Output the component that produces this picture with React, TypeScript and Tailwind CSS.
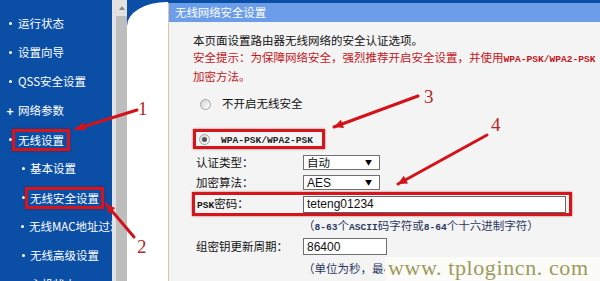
import React from "react";

type Item = { label: React.ReactNode; sub?: boolean; plus?: boolean; boxed?: boolean };

const menu: Item[] = [
  { label: "运行状态" },
  { label: "设置向导" },
  { label: "QSS安全设置" },
  { label: "网络参数", plus: true },
  { label: "无线设置", boxed: true },
  { label: "基本设置", sub: true },
  { label: "无线安全设置", sub: true, boxed: true },
  { label: "无线MAC地址过滤", sub: true },
  { label: "无线高级设置", sub: true },
  { label: "主机状态", sub: true },
];

function Mono({ children }: { children: React.ReactNode }) {
  return <span className="font-['Liberation_Mono',monospace] text-[9.6px] font-bold">{children}</span>;
}

function Radio({ checked }: { checked?: boolean }) {
  return (
    <span className="flex h-[11px] w-[11px] shrink-0 items-center justify-center rounded-full border border-[#a3a3a3] bg-gradient-to-br from-[#d6d6d6] to-white">
      {checked && <span className="h-[5px] w-[5px] rounded-full bg-[#555]" />}
    </span>
  );
}

function Select({ value, latin }: { value: string; latin?: boolean }) {
  return (
    <div className="flex h-[15px] w-[77px] items-center justify-between border border-[#6f6f6f] bg-white pl-[3px] pr-[7px]">
      <span className={latin ? "font-['Liberation_Sans',sans-serif] text-[12px]" : "text-[11.5px]"}>{value}</span>
      <span className="text-[7px] leading-none text-black">▼</span>
    </div>
  );
}

// arrow head polygon pointing at (x, y), coming from (fx, fy)
function head(x: number, y: number, fx: number, fy: number) {
  const a = Math.atan2(y - fy, x - fx);
  const l = 9;
  const w = 4.5;
  const bx = x - l * Math.cos(a);
  const by = y - l * Math.sin(a);
  const px = -Math.sin(a) * w;
  const py = Math.cos(a) * w;
  return `${x},${y} ${bx + px},${by + py} ${bx - px},${by - py}`;
}

const lines = [
  { x: 76, y: 129, fx: 137, fy: 110 },
  { x: 106, y: 204, fx: 134, fy: 237 },
  { x: 334, y: 127, fx: 418, fy: 96 },
  { x: 398, y: 184, fx: 487, fy: 135 },
];

export default function App() {
  return (
    <div className="relative flex h-[281px] w-[600px] overflow-hidden bg-[#0b4ea6] font-['Noto_Sans_CJK_SC',sans-serif]">
      {/* 左侧菜单 */}
      <nav className="w-[112px] shrink-0 overflow-hidden pt-[9px] text-[11.5px] text-white">
        {menu.map((m, i) => (
          <div key={i} className={`flex h-[29px] items-center whitespace-nowrap ${m.sub ? "pl-[21px]" : "pl-[8px]"}`}>
            <span className="flex w-[4px] justify-center">
              {m.plus ? (
                <span className="text-[12px] font-bold leading-none">+</span>
              ) : (
                <span className="h-[3px] w-[3px] shrink-0 rounded-full bg-white" />
              )}
            </span>
            {m.boxed ? (
              <span
                className={`border-[3px] border-[#d6141c] leading-[16px] shadow-[0_0_2px_rgba(120,0,0,0.6)] ${
                  m.sub ? "px-[2px]" : "px-[3px]"
                }`}
              >
                {m.label}
              </span>
            ) : (
              <span className={m.sub ? "ml-[5px]" : "ml-[6px]"}>{m.label}</span>
            )}
          </div>
        ))}
      </nav>

      {/* 滚动条 */}
      <div className="flex w-[15px] shrink-0 flex-col bg-[#e2e2e2]">
        <div className="flex h-[16px] items-center justify-center pl-[4px]">
          <span className="h-0 w-0 border-x-[3px] border-b-[4px] border-x-transparent border-b-[#8a8a8a]" />
        </div>
        <div className="ml-[4px] flex-1 bg-[#bdbdbd]" />
      </div>

      {/* 白色过渡区 */}
      <div className="mt-[2px] w-[41px] shrink-0 rounded-tl-[40px_24px] bg-white" />

      {/* 主内容 */}
      <div className="mt-[3px] flex flex-1 flex-col border-l border-[#d8c9a9] bg-[#f4f4f4]">
        <div className="h-[19px] bg-[#6c9de9] pl-[6px] text-[11.4px] leading-[19px] text-white">无线网络安全设置</div>

        <div className="flex flex-col pl-[24px] pt-[10px] text-[11.5px] text-[#111]">
          <div className="whitespace-nowrap leading-[17px]">
            <div>本页面设置路由器无线网络的安全认证选项。</div>
            <div className="text-[#c4161c]">
              安全提示：为保障网络安全，强烈推荐开启安全设置，并使用<Mono>WPA-PSK/WPA2-PSK</Mono>
            </div>
            <div className="text-[#c4161c]">加密方法。</div>
          </div>

          <div className="mt-[11px] flex h-[16px] items-center">
            <span className="ml-[7px]">
              <Radio />
            </span>
            <span className="ml-[11px]">不开启无线安全</span>
          </div>

          <div className="mt-[17px] flex h-[20px] w-[132px] items-center border-[3px] border-[#d6141c] shadow-[0_0_2px_rgba(120,0,0,0.6)]">
            <span className="ml-[3px]">
              <Radio checked />
            </span>
            <span className="ml-[11px] text-[#222]">
              <Mono>WPA-PSK/WPA2-PSK</Mono>
            </span>
          </div>

          <div className="mt-[6px] flex h-[15px] items-center">
            <span className="w-[110px] pl-[3px]">认证类型：</span>
            <Select value="自动" />
          </div>

          <div className="mt-[5px] flex h-[15px] items-center">
            <span className="w-[110px] pl-[3px]">加密算法：</span>
            <Select value="AES" latin />
          </div>

          <div className="-ml-[1px] mt-[2px] flex h-[24px] w-[380px] items-center border-[3px] border-[#d6141c] shadow-[0_0_2px_rgba(120,0,0,0.6)]">
            <span className="w-[108px] pl-[2px]">
              <Mono>PSK</Mono>密码：
            </span>
            <div className="flex h-[17px] w-[263px] items-center border border-[#5e6470] bg-white pl-[3px] font-['Liberation_Sans',sans-serif] text-[12px]">
              teteng01234
            </div>
          </div>

          <div className="mt-[1px] h-[16px] whitespace-nowrap pl-[110px] leading-[16px] text-[#2b3762]">
            （<Mono>8-63</Mono>个<Mono>ASCII</Mono>码字符或<Mono>8-64</Mono>个十六进制字符）
          </div>

          <div className="mt-[5px] flex h-[17px] items-center">
            <span className="w-[110px] pl-[3px]">组密钥更新周期：</span>
            <div className="flex h-[17px] w-[84px] items-center border border-[#6f6f6f] bg-white pl-[3px] font-['Liberation_Sans',sans-serif] text-[12px]">
              86400
            </div>
          </div>

          <div className="mt-[5px] h-[16px] whitespace-nowrap pl-[110px] leading-[16px] text-[#2b3762]">
            （单位为秒，最小值为30，不更新则为0）
          </div>
        </div>
      </div>

      {/* 水印 */}
      <div className="absolute bottom-0 left-[385px] right-0 top-[257px] bg-[#fbfbf7] pl-[3px] font-['Liberation_Serif',serif] text-[22px] leading-[22px] tracking-[0.6px] text-[#9d9a5d]">
        www. tplogincn. com
      </div>

      {/* 标注 */}
      <svg className="pointer-events-none absolute inset-0" width="600" height="281">
        {lines.map((l, i) => (
          <g key={i}>
            <line x1={l.x} y1={l.y} x2={l.fx} y2={l.fy} stroke="#d3121a" strokeWidth="3" strokeLinecap="round" />
            <polygon points={head(l.x, l.y, l.fx, l.fy)} fill="#d3121a" />
          </g>
        ))}
      </svg>
      <span className="absolute left-[138px] top-[99px] font-['Liberation_Serif',serif] text-[19px] leading-[19px] text-[#b3262a]">1</span>
      <span className="absolute left-[137px] top-[237px] font-['Liberation_Serif',serif] text-[19px] leading-[19px] text-[#b3262a]">2</span>
      <span className="absolute left-[424px] top-[87px] font-['Liberation_Serif',serif] text-[19px] leading-[19px] text-[#b3262a]">3</span>
      <span className="absolute left-[491px] top-[115px] font-['Liberation_Serif',serif] text-[19px] leading-[19px] text-[#b3262a]">4</span>
    </div>
  );
}
